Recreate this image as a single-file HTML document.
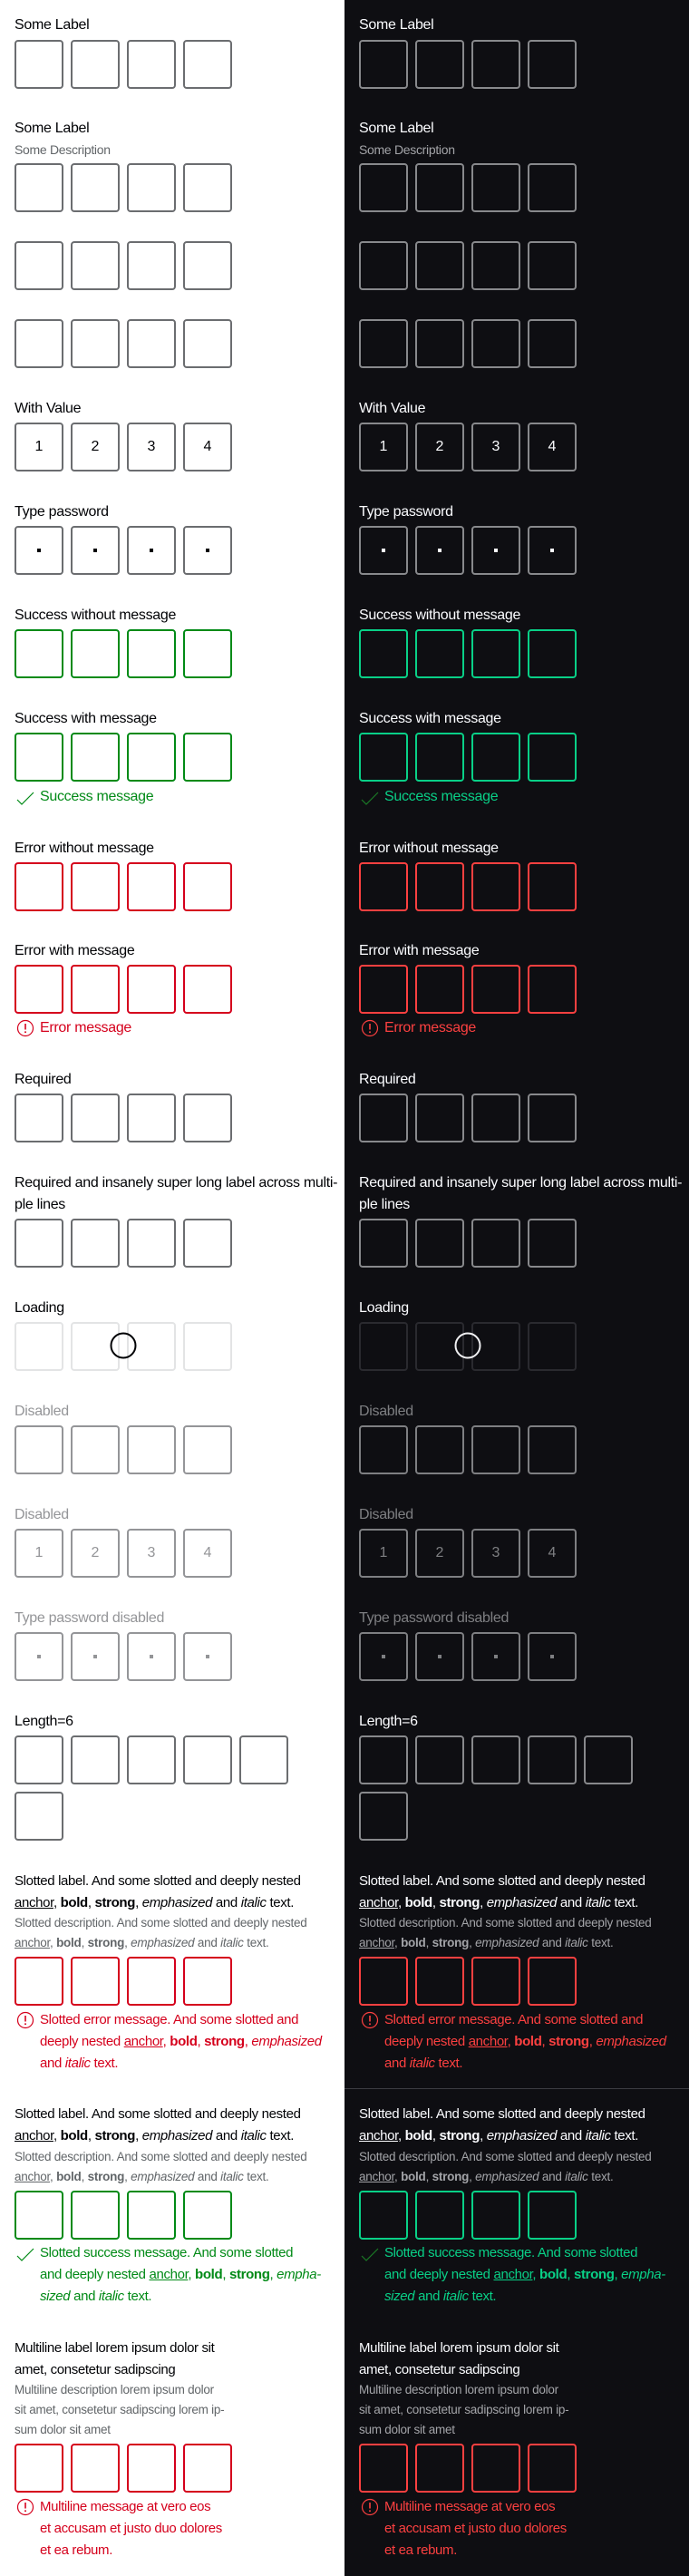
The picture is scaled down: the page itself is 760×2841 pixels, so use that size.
<!DOCTYPE html>
<html lang="en"><head><meta charset="utf-8">
<style>
html,body{margin:0;padding:0}
body{width:760px;height:2841px;position:relative;overflow:hidden;font-family:"Liberation Sans",sans-serif;}
.col{position:absolute;top:0;width:380px;height:2841px;
 --t:#010205;--desc:#626669;--b:#6b6d70;--ok:#018a16;--er:#d5001c;--ld:#e3e4e5;--ds:#949598;--sp:#010205;--ic:#018a16;background:#fff;color:var(--t)}
.col.dark{left:380px;background:#0e0e12;--t:#fbfcff;--desc:#a3a4a8;--b:#88898c;--ok:#09d087;--er:#fc4040;--ld:#2a2a2f;--ds:#7e7f82;--sp:#f0f0f2;--ic:#1b7a26}
.l{position:absolute;left:16px;line-height:24px;font-size:16px;white-space:nowrap;letter-spacing:-0.3px}
.l.s{font-size:15px;letter-spacing:-0.35px}
.d{position:absolute;left:16px;line-height:22px;font-size:14px;white-space:nowrap;color:var(--desc);letter-spacing:-0.3px}
.d.s{font-size:13.5px;letter-spacing:-0.25px}
.r{position:absolute;left:16px;display:flex;gap:8px}
.r i{width:54px;height:54px;box-sizing:border-box;border:2px solid var(--b);border-radius:4px;display:flex;align-items:center;justify-content:center;font-style:normal;font-size:16px;color:var(--t)}
.r.ok i{border-color:var(--ok)}.r.er i{border-color:var(--er)}.r.ld i{border-color:var(--ld)}
.r.ds i{border-color:var(--ds);color:var(--ds)}
.dot{width:4px;height:4px;background:var(--t)}
.ds .dot{background:var(--ds)}
.m{position:absolute;left:44px;line-height:24px;font-size:16px;white-space:nowrap;letter-spacing:-0.3px}
.m.s{font-size:15px;letter-spacing:-0.35px}
.okc{color:var(--ok)}.erc{color:var(--er)}
.dis{color:var(--ds)}
.ico{position:absolute;left:16px;width:24px;height:24px}
a{color:inherit;text-decoration:underline}
.sp{position:absolute;left:121px;top:1469px;width:30px;height:30px}
.hr{position:absolute;left:0;top:2303px;width:380px;height:1px;background:#3c3c42}
</style></head><body>

<div class="col" style="left:0">
<div class="l" style="top:16px">Some Label</div>
<div class="r" style="top:44px"><i></i><i></i><i></i><i></i></div>

<div class="l" style="top:130px">Some Label</div>
<div class="d" style="top:154px">Some Description</div>
<div class="r" style="top:180px"><i></i><i></i><i></i><i></i></div>
<div class="r" style="top:266px"><i></i><i></i><i></i><i></i></div>
<div class="r" style="top:352px"><i></i><i></i><i></i><i></i></div>

<div class="l" style="top:439px">With Value</div>
<div class="r" style="top:466px"><i>1</i><i>2</i><i>3</i><i>4</i></div>

<div class="l" style="top:553px">Type password</div>
<div class="r" style="top:580px"><i><span class="dot"></span></i><i><span class="dot"></span></i><i><span class="dot"></span></i><i><span class="dot"></span></i></div>

<div class="l" style="top:667px">Success without message</div>
<div class="r ok" style="top:694px"><i></i><i></i><i></i><i></i></div>

<div class="l" style="top:781px">Success with message</div>
<div class="r ok" style="top:808px"><i></i><i></i><i></i><i></i></div>
<svg class="ico" style="top:867px" viewBox="0 0 24 24"><polyline points="3,15 8,20 21,7" fill="none" stroke="var(--ic)" stroke-width="1.2"/></svg>
<div class="m okc" style="top:867px">Success message</div>

<div class="l" style="top:924px">Error without message</div>
<div class="r er" style="top:951px"><i></i><i></i><i></i><i></i></div>

<div class="l" style="top:1037px">Error with message</div>
<div class="r er" style="top:1064px"><i></i><i></i><i></i><i></i></div>
<svg class="ico" style="top:1122px" viewBox="0 0 24 24"><circle cx="12" cy="12" r="8.5" fill="none" stroke="var(--er)" stroke-width="1.2"/><line x1="12" y1="7" x2="12" y2="13.5" stroke="var(--er)" stroke-width="1.6"/><circle cx="12" cy="16.3" r="1" fill="var(--er)"/></svg>
<div class="m erc" style="top:1122px">Error message</div>

<div class="l" style="top:1179px">Required</div>
<div class="r" style="top:1206px"><i></i><i></i><i></i><i></i></div>

<div class="l" style="top:1293px">Required and insanely super long label across multi-</div>
<div class="l" style="top:1317px">ple lines</div>
<div class="r" style="top:1344px"><i></i><i></i><i></i><i></i></div>

<div class="l" style="top:1431px">Loading</div>
<div class="r ld" style="top:1458px"><i></i><i></i><i></i><i></i></div>
<svg class="sp" viewBox="0 0 30 30"><circle cx="15" cy="15" r="13.5" fill="none" stroke="var(--sp)" stroke-width="2"/></svg>

<div class="l dis" style="top:1545px">Disabled</div>
<div class="r ds" style="top:1572px"><i></i><i></i><i></i><i></i></div>

<div class="l dis" style="top:1659px">Disabled</div>
<div class="r ds" style="top:1686px"><i>1</i><i>2</i><i>3</i><i>4</i></div>

<div class="l dis" style="top:1773px">Type password disabled</div>
<div class="r ds" style="top:1800px"><i><span class="dot"></span></i><i><span class="dot"></span></i><i><span class="dot"></span></i><i><span class="dot"></span></i></div>

<div class="l" style="top:1887px">Length=6</div>
<div class="r" style="top:1914px"><i></i><i></i><i></i><i></i><i></i></div>
<div class="r" style="top:1976px"><i></i></div>

<div class="l s" style="top:2063px">Slotted label. And some slotted and deeply nested</div>
<div class="l s" style="top:2087px"><a>anchor</a>, <b>bold</b>, <strong>strong</strong>, <em>emphasized</em> and <i>italic</i> text.</div>
<div class="d s" style="top:2110px">Slotted description. And some slotted and deeply nested</div>
<div class="d s" style="top:2132px"><a>anchor</a>, <b>bold</b>, <strong>strong</strong>, <em>emphasized</em> and <i>italic</i> text.</div>
<div class="r er" style="top:2158px"><i></i><i></i><i></i><i></i></div>
<svg class="ico" style="top:2216px" viewBox="0 0 24 24"><circle cx="12" cy="12" r="8.5" fill="none" stroke="var(--er)" stroke-width="1.2"/><line x1="12" y1="7" x2="12" y2="13.5" stroke="var(--er)" stroke-width="1.6"/><circle cx="12" cy="16.3" r="1" fill="var(--er)"/></svg>
<div class="m s erc" style="top:2216px">Slotted error message. And some slotted and</div>
<div class="m s erc" style="top:2240px">deeply nested <a>anchor</a>, <b>bold</b>, <strong>strong</strong>, <em>emphasized</em></div>
<div class="m s erc" style="top:2264px">and <i>italic</i> text.</div>

<div class="l s" style="top:2320px">Slotted label. And some slotted and deeply nested</div>
<div class="l s" style="top:2344px"><a>anchor</a>, <b>bold</b>, <strong>strong</strong>, <em>emphasized</em> and <i>italic</i> text.</div>
<div class="d s" style="top:2368px">Slotted description. And some slotted and deeply nested</div>
<div class="d s" style="top:2390px"><a>anchor</a>, <b>bold</b>, <strong>strong</strong>, <em>emphasized</em> and <i>italic</i> text.</div>
<div class="r ok" style="top:2416px"><i></i><i></i><i></i><i></i></div>
<svg class="ico" style="top:2473px" viewBox="0 0 24 24"><polyline points="3,15 8,20 21,7" fill="none" stroke="var(--ic)" stroke-width="1.2"/></svg>
<div class="m s okc" style="top:2473px">Slotted success message. And some slotted</div>
<div class="m s okc" style="top:2497px">and deeply nested <a>anchor</a>, <b>bold</b>, <strong>strong</strong>, <em>empha-</em></div>
<div class="m s okc" style="top:2521px"><em>sized</em> and <i>italic</i> text.</div>

<div class="l s" style="top:2578px">Multiline label lorem ipsum dolor sit</div>
<div class="l s" style="top:2602px">amet, consetetur sadipscing</div>
<div class="d s" style="top:2625px">Multiline description lorem ipsum dolor</div>
<div class="d s" style="top:2647px">sit amet, consetetur sadipscing lorem ip-</div>
<div class="d s" style="top:2669px">sum dolor sit amet</div>
<div class="r er" style="top:2695px"><i></i><i></i><i></i><i></i></div>
<svg class="ico" style="top:2753px" viewBox="0 0 24 24"><circle cx="12" cy="12" r="8.5" fill="none" stroke="var(--er)" stroke-width="1.2"/><line x1="12" y1="7" x2="12" y2="13.5" stroke="var(--er)" stroke-width="1.6"/><circle cx="12" cy="16.3" r="1" fill="var(--er)"/></svg>
<div class="m s erc" style="top:2753px">Multiline message at vero eos</div>
<div class="m s erc" style="top:2777px">et accusam et justo duo dolores</div>
<div class="m s erc" style="top:2801px">et ea rebum.</div>
</div>

<div class="col dark">
<div class="l" style="top:16px">Some Label</div>
<div class="r" style="top:44px"><i></i><i></i><i></i><i></i></div>

<div class="l" style="top:130px">Some Label</div>
<div class="d" style="top:154px">Some Description</div>
<div class="r" style="top:180px"><i></i><i></i><i></i><i></i></div>
<div class="r" style="top:266px"><i></i><i></i><i></i><i></i></div>
<div class="r" style="top:352px"><i></i><i></i><i></i><i></i></div>

<div class="l" style="top:439px">With Value</div>
<div class="r" style="top:466px"><i>1</i><i>2</i><i>3</i><i>4</i></div>

<div class="l" style="top:553px">Type password</div>
<div class="r" style="top:580px"><i><span class="dot"></span></i><i><span class="dot"></span></i><i><span class="dot"></span></i><i><span class="dot"></span></i></div>

<div class="l" style="top:667px">Success without message</div>
<div class="r ok" style="top:694px"><i></i><i></i><i></i><i></i></div>

<div class="l" style="top:781px">Success with message</div>
<div class="r ok" style="top:808px"><i></i><i></i><i></i><i></i></div>
<svg class="ico" style="top:867px" viewBox="0 0 24 24"><polyline points="3,15 8,20 21,7" fill="none" stroke="var(--ic)" stroke-width="1.2"/></svg>
<div class="m okc" style="top:867px">Success message</div>

<div class="l" style="top:924px">Error without message</div>
<div class="r er" style="top:951px"><i></i><i></i><i></i><i></i></div>

<div class="l" style="top:1037px">Error with message</div>
<div class="r er" style="top:1064px"><i></i><i></i><i></i><i></i></div>
<svg class="ico" style="top:1122px" viewBox="0 0 24 24"><circle cx="12" cy="12" r="8.5" fill="none" stroke="var(--er)" stroke-width="1.2"/><line x1="12" y1="7" x2="12" y2="13.5" stroke="var(--er)" stroke-width="1.6"/><circle cx="12" cy="16.3" r="1" fill="var(--er)"/></svg>
<div class="m erc" style="top:1122px">Error message</div>

<div class="l" style="top:1179px">Required</div>
<div class="r" style="top:1206px"><i></i><i></i><i></i><i></i></div>

<div class="l" style="top:1293px">Required and insanely super long label across multi-</div>
<div class="l" style="top:1317px">ple lines</div>
<div class="r" style="top:1344px"><i></i><i></i><i></i><i></i></div>

<div class="l" style="top:1431px">Loading</div>
<div class="r ld" style="top:1458px"><i></i><i></i><i></i><i></i></div>
<svg class="sp" viewBox="0 0 30 30"><circle cx="15" cy="15" r="13.5" fill="none" stroke="var(--sp)" stroke-width="2"/></svg>

<div class="l dis" style="top:1545px">Disabled</div>
<div class="r ds" style="top:1572px"><i></i><i></i><i></i><i></i></div>

<div class="l dis" style="top:1659px">Disabled</div>
<div class="r ds" style="top:1686px"><i>1</i><i>2</i><i>3</i><i>4</i></div>

<div class="l dis" style="top:1773px">Type password disabled</div>
<div class="r ds" style="top:1800px"><i><span class="dot"></span></i><i><span class="dot"></span></i><i><span class="dot"></span></i><i><span class="dot"></span></i></div>

<div class="l" style="top:1887px">Length=6</div>
<div class="r" style="top:1914px"><i></i><i></i><i></i><i></i><i></i></div>
<div class="r" style="top:1976px"><i></i></div>

<div class="l s" style="top:2063px">Slotted label. And some slotted and deeply nested</div>
<div class="l s" style="top:2087px"><a>anchor</a>, <b>bold</b>, <strong>strong</strong>, <em>emphasized</em> and <i>italic</i> text.</div>
<div class="d s" style="top:2110px">Slotted description. And some slotted and deeply nested</div>
<div class="d s" style="top:2132px"><a>anchor</a>, <b>bold</b>, <strong>strong</strong>, <em>emphasized</em> and <i>italic</i> text.</div>
<div class="r er" style="top:2158px"><i></i><i></i><i></i><i></i></div>
<svg class="ico" style="top:2216px" viewBox="0 0 24 24"><circle cx="12" cy="12" r="8.5" fill="none" stroke="var(--er)" stroke-width="1.2"/><line x1="12" y1="7" x2="12" y2="13.5" stroke="var(--er)" stroke-width="1.6"/><circle cx="12" cy="16.3" r="1" fill="var(--er)"/></svg>
<div class="m s erc" style="top:2216px">Slotted error message. And some slotted and</div>
<div class="m s erc" style="top:2240px">deeply nested <a>anchor</a>, <b>bold</b>, <strong>strong</strong>, <em>emphasized</em></div>
<div class="m s erc" style="top:2264px">and <i>italic</i> text.</div>

<div class="hr"></div>

<div class="l s" style="top:2320px">Slotted label. And some slotted and deeply nested</div>
<div class="l s" style="top:2344px"><a>anchor</a>, <b>bold</b>, <strong>strong</strong>, <em>emphasized</em> and <i>italic</i> text.</div>
<div class="d s" style="top:2368px">Slotted description. And some slotted and deeply nested</div>
<div class="d s" style="top:2390px"><a>anchor</a>, <b>bold</b>, <strong>strong</strong>, <em>emphasized</em> and <i>italic</i> text.</div>
<div class="r ok" style="top:2416px"><i></i><i></i><i></i><i></i></div>
<svg class="ico" style="top:2473px" viewBox="0 0 24 24"><polyline points="3,15 8,20 21,7" fill="none" stroke="var(--ic)" stroke-width="1.2"/></svg>
<div class="m s okc" style="top:2473px">Slotted success message. And some slotted</div>
<div class="m s okc" style="top:2497px">and deeply nested <a>anchor</a>, <b>bold</b>, <strong>strong</strong>, <em>empha-</em></div>
<div class="m s okc" style="top:2521px"><em>sized</em> and <i>italic</i> text.</div>

<div class="l s" style="top:2578px">Multiline label lorem ipsum dolor sit</div>
<div class="l s" style="top:2602px">amet, consetetur sadipscing</div>
<div class="d s" style="top:2625px">Multiline description lorem ipsum dolor</div>
<div class="d s" style="top:2647px">sit amet, consetetur sadipscing lorem ip-</div>
<div class="d s" style="top:2669px">sum dolor sit amet</div>
<div class="r er" style="top:2695px"><i></i><i></i><i></i><i></i></div>
<svg class="ico" style="top:2753px" viewBox="0 0 24 24"><circle cx="12" cy="12" r="8.5" fill="none" stroke="var(--er)" stroke-width="1.2"/><line x1="12" y1="7" x2="12" y2="13.5" stroke="var(--er)" stroke-width="1.6"/><circle cx="12" cy="16.3" r="1" fill="var(--er)"/></svg>
<div class="m s erc" style="top:2753px">Multiline message at vero eos</div>
<div class="m s erc" style="top:2777px">et accusam et justo duo dolores</div>
<div class="m s erc" style="top:2801px">et ea rebum.</div>
</div>
</body></html>
